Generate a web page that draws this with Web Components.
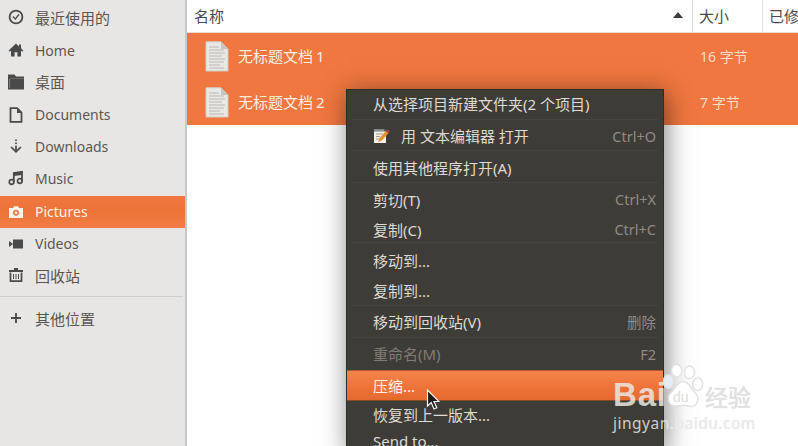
<!DOCTYPE html>
<html><head><meta charset="utf-8"><style>
html,body{margin:0;height:100%;overflow:hidden}
body{width:798px;height:446px;font:14px "Noto Sans","Noto Sans CJK SC",sans-serif;background:#fff}
</style></head><body>
<x-app>
  <x-sidebar slot="side">
    <x-place icon="clock" cjk>最近使用的</x-place>
    <x-place icon="home">Home</x-place>
    <x-place icon="folder" cjk>桌面</x-place>
    <x-place icon="doc">Documents</x-place>
    <x-place icon="down" lift>Downloads</x-place>
    <x-place icon="music" lift>Music</x-place>
    <x-place icon="camera" active>Pictures</x-place>
    <x-place icon="video">Videos</x-place>
    <x-place icon="trash" cjk>回收站</x-place>
    <x-rule></x-rule>
    <x-place icon="plus" cjk style="padding-bottom:0">其他位置</x-place>
  </x-sidebar>
  <x-files slot="main">
    <x-file-row name="无标题文档 1" size="16 字节"></x-file-row>
    <x-file-row name="无标题文档 2" size="7 字节"></x-file-row>
  </x-files>
  <x-menu slot="over">
    <x-item h="30" pb="4">从选择项目新建文件夹(2 个项目)</x-item>
    <x-item h="31" pb="0" icon accel="Ctrl+O" sep>用 文本编辑器 打开</x-item>
    <x-item h="32" pb="0" sep>使用其他程序打开(A)</x-item>
    <x-item h="34" accel="Ctrl+X" sep>剪切(T)</x-item>
    <x-item h="26" accel="Ctrl+C">复制(C)</x-item>
    <x-item h="36" sep>移动到...</x-item>
    <x-item h="27" pb="4">复制到...</x-item>
    <x-item h="32" accel="删除" sep>移动到回收站(V)</x-item>
    <x-item h="33" accel="F2" disabled sep>重命名(M)</x-item>
    <x-item h="29" pb="0" hot sep>压缩...</x-item>
    <x-item h="31">恢复到上一版本...</x-item>
    <x-item h="22">Send to...</x-item>
  </x-menu>
  <x-cursor slot="over"></x-cursor>
  <x-watermark slot="over"></x-watermark>
</x-app>
<script>
function def(name, css, html, init){
  customElements.define(name, class extends HTMLElement{
    constructor(){super();this.attachShadow({mode:'open'});}
    connectedCallback(){
      this.shadowRoot.innerHTML='<style>'+css+'</style>'+(typeof html==='function'?html(this):html);
      if(init)init(this);
    }
  });
}
const ICONS={
 clock:'<circle cx="8" cy="8" r="6.4" fill="none" stroke="#4a4a4a" stroke-width="1.8"/><path d="M4.8 7.6 7.4 10 11 5.4" fill="none" stroke="#4a4a4a" stroke-width="1.4"/>',
 home:'<path d="M8 1.5 0.6 8.6 1.8 9.7 3 8.6V14.4H6.6V10.2H9.4V14.4H13V8.6L14.2 9.7 15.4 8.6 13 6.3V2.6H11V4.4Z" fill="#4a4a4a"/>',
 folder:'<path d="M0 0.5H6.5L8 2.5H16V15.5H0Z" fill="#4a4a4a"/><path d="M1.6 5V14" stroke="#82807e" stroke-width="1"/><path d="M2 4.6H16" stroke="#76746f" stroke-width=".8"/>',
 doc:'<path d="M2.5 1.2H9.2L13.5 5.5V14.8H2.5Z" fill="none" stroke="#4a4a4a" stroke-width="1.8"/><path d="M9 1.5 13.5 6H9Z" fill="#4a4a4a"/>',
 down:'<path d="M8 1.5V3M8 4.5V6M8 7.5V12.5" stroke="#4a4a4a" stroke-width="1.7" fill="none"/><path d="M2.5 9.5 8 15 13.5 9.5 12.3 8.4 8 12.6 3.7 8.4Z" fill="#4a4a4a"/>',
 music:'<path d="M5.8 12V3L14 1.8V10.8" fill="none" stroke="#4a4a4a" stroke-width="1.8"/><path d="M5.8 3 14 1.8V5L5.8 6Z" fill="#4a4a4a"/><circle cx="3.6" cy="12" r="2.3" fill="none" stroke="#4a4a4a" stroke-width="1.7"/><circle cx="11.8" cy="11" r="2.3" fill="none" stroke="#4a4a4a" stroke-width="1.7"/>',
 camera:'<path d="M1 4H5L6 2.2H10L11 4H15V14H1Z" fill="#fff3ea"/><circle cx="8" cy="8.8" r="3" fill="#ef7a42"/><circle cx="8" cy="8.8" r="1.3" fill="#fff3ea"/>',
 video:'<path d="M1 5 5 8 1 11Z" fill="#4a4a4a"/><rect x="5" y="3.5" width="10" height="9" fill="#4a4a4a"/>',
 trash:'<path d="M6 1H10V3H15V5H1V3H6Z" fill="#4a4a4a"/><path d="M2.5 5.5V14.2H13.5V5.5" fill="none" stroke="#4a4a4a" stroke-width="1.7"/><path d="M5.5 7V12M8 7V12M10.5 7V12" stroke="#4a4a4a" stroke-width="1"/>',
 plus:'<path d="M8 3V13M3 8H13" stroke="#4a4a4a" stroke-width="1.8"/>'
};
def('x-app',
 ':host{display:flex;width:798px;height:446px;position:relative;overflow:hidden}',
 '<slot name="side"></slot><slot name="main"></slot><slot name="over"></slot>');
def('x-sidebar',
 ':host{display:block;box-sizing:border-box;width:187px;height:446px;flex:none;background:#e8e6e4;border-right:2px solid #cbc9c7;padding-top:2px}',
 '<slot></slot>');
def('x-rule',
 ':host{display:block;height:1px;background:#cfcdcb;margin:4px 2px 5px 0}','');
def('x-place',
 `:host{display:flex;align-items:center;box-sizing:border-box;height:32.25px;color:#5a5753;font-size:14px;white-space:nowrap}
  :host([cjk]){font-size:15px;padding-bottom:2px}
  :host([lift]){padding-bottom:2px}
  :host([active]){color:#fff3ea;background:linear-gradient(#f0773f,#ec7438 50%,#f27c45)}
  svg{width:16px;height:16px;margin:0 11px 0 8px;flex:none}`,
 h=>`<svg viewBox="0 0 16 16">${ICONS[h.getAttribute('icon')]}</svg><slot></slot>`);
def('x-files',
 `:host{display:block;flex:1;min-width:0}
  .head{display:flex;height:32px;color:#4a4a4a;font-size:15px;background:#fff;border-bottom:1px solid #ecdcd2}
  .c{display:flex;align-items:center;box-sizing:border-box;padding-left:6px;padding-bottom:2px;border-left:1px solid #dcdcdc;white-space:nowrap;overflow:hidden}
  .n{width:505px;justify-content:space-between;border-left:0;padding-left:7px;padding-right:9px}
  .s{width:70px}.m{flex:1}
  .arrow{width:0;height:0;border:5px solid transparent;border-bottom:6px solid #3c3c3c;border-top:0}`,
 `<div class="head"><div class="c n">名称<span class="arrow"></span></div><div class="c s">大小</div><div class="c m">已修</div></div><slot></slot>`);
def('x-file-row',
 `:host{display:flex;align-items:center;height:46px;background:#f0773f;color:#fdeee2;font-size:15px;white-space:nowrap}
  svg{width:24px;height:31px;margin-left:18px;flex:none}
  .n{margin-left:9px;width:462px;flex:none;padding-bottom:2px;word-spacing:-1px}
  .s{font-size:14px;color:#fbdcc6}`,
 h=>`<svg viewBox="0 0 24 31"><path d="M1 .8H16L23 8V30H1Z" fill="#e9e8e4" stroke="#cfcdc7"/><path d="M16 1V8H23Z" fill="#c5c6c4"/><path d="M4 6H14M4 9H19M4 12H20M4 15H17M4 18H20M4 21H19M4 24H15M4 27H19" stroke="#b4b3ae" stroke-width=".9"/></svg><span class="n">${h.getAttribute('name')}</span><span class="s">${h.getAttribute('size')}</span>`);
def('x-menu',
 `:host{position:absolute;left:346px;top:89px;width:318px;height:362px;background:#3e3c37;border:1px solid #2e2c28;box-shadow:2px 4px 24px rgba(0,0,0,.5);box-sizing:border-box;color:#dfdbd2;overflow:visible}`,
 '<slot></slot>');
def('x-item',
 `:host{display:flex;align-items:center;box-sizing:border-box;padding:0 7px 2px 26px;font-size:15px;white-space:nowrap;position:relative}
  :host([sep])::before{content:"";position:absolute;left:5px;right:5px;top:-1px;height:1px;background:#46443f}
  :host([disabled]){color:#7f7c74}
  :host([hot]){background:linear-gradient(#f5844c,#ee7238 60%,#e56a30);color:#fff1e4;box-shadow:0 -1px #b25a2e,0 1px #8a4a28}
  :host([hot])::before{display:none}
  .t{flex:1}.a{color:#8e8b83;font-size:14.5px}
  svg{width:18px;height:16px;flex:none;margin-right:10px}`,
 h=>{h.style.height=h.getAttribute('h')+'px';
  if(h.hasAttribute('pb'))h.style.paddingBottom=h.getAttribute('pb')+'px';
  return (h.hasAttribute('icon')?`<svg viewBox="0 0 18 16"><rect x="1" y="2" width="12" height="13" fill="#f4f1e6"/><path d="M1 1H13V3.5H1Z" fill="#55595c"/><path d="M2 1.2V3.5M4 1.2V3.5M6 1.2V3.5M8 1.2V3.5M10 1.2V3.5" stroke="#e8e8e0" stroke-width=".8"/><path d="M3 6H10M3 8.5H7M3 11H6" stroke="#9a9a90"/><path d="M5 14 6.5 10 13 3 15.5 5.2 9 12.2Z" fill="#e8912f"/><path d="M13 3 14.8 1.2 17 3.4 15.5 5.2Z" fill="#a8443e"/></svg>`:'')+
  `<span class="t"><slot></slot></span>`+(h.getAttribute('accel')?`<span class="a">${h.getAttribute('accel')}</span>`:'');});
def('x-cursor',
 ':host{position:absolute;left:426px;top:389px;width:14px;height:22px;display:block}svg{display:block}',
 '<svg width="14" height="22" viewBox="0 0 14 22"><path d="M1.5 1V17L5.2 13.5 8 20 10.8 18.8 8 12.5H13Z" fill="#1c1c1c" stroke="#f4f4f4" stroke-width="1.2"/></svg>');
def('x-watermark',
 `:host{position:absolute;left:611px;top:360px;width:150px;height:74px;display:block;color:rgba(235,232,228,.85);pointer-events:none}
  .bai{position:absolute;left:2px;top:21px;font:700 33px/28px "Liberation Sans",sans-serif;letter-spacing:.8px}
  svg{position:absolute;left:52px;top:3px}
  .du{position:absolute;left:62px;top:30px;font:14px/14px "Liberation Sans",sans-serif;color:#dcdcdc}
  .jy{position:absolute;left:94px;top:24px;font:400 23px/25px "Noto Sans CJK SC",sans-serif;color:#e2e2e2;text-shadow:0 0 1px #ccc}
  .url{position:absolute;left:2px;top:53px;font:15.5px/20px "Noto Sans",sans-serif;letter-spacing:.5px;white-space:nowrap}
  .url b{font-weight:400;color:#ececec;text-shadow:0 0 1px #ddd}`,
 `<span class="bai">Bai</span>
  <svg width="42" height="48" viewBox="0 0 46 52"><g fill="#fff" stroke="#e2e2e2" stroke-width="1.6"><ellipse cx="6" cy="20" rx="5.5" ry="7.5" fill="#e4ecf6"/><ellipse cx="15" cy="8" rx="5.5" ry="7"/><ellipse cx="29" cy="10" rx="5.5" ry="7"/><ellipse cx="38" cy="23" rx="5.5" ry="7"/><path d="M22 20C15 20 14 28 9 32 4 36 5 47 14 47 19 47 22 45 29 47 38 49 41 38 35 32 30 28 29 20 22 20Z"/></g></svg>
  <span class="du">du</span><span class="jy">经验</span>
  <span class="url">jingyan<b>.baidu.com</b></span>`);
</script>
</body></html>
